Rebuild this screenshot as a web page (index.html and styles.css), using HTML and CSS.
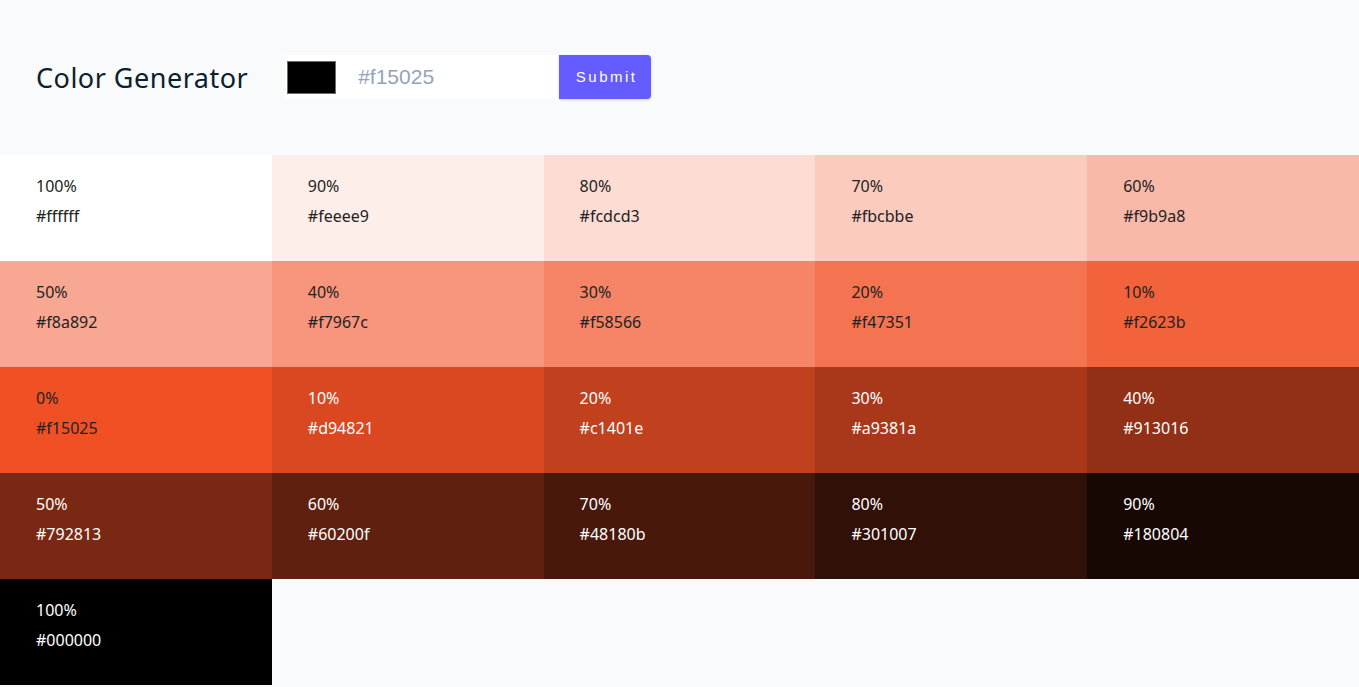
FILE: index.html
```html
<!DOCTYPE html>
<html lang="en">
<head>
<meta charset="utf-8">
<title>Color Generator</title>
<link rel="stylesheet" href="styles.css">
</head>
<body>
<section class="container">
  <h3 class="title">Color Generator</h3>
  <form class="form">
    <div class="field">
      <span class="swatch"></span>
      <input class="hex-input" type="text" placeholder="#f15025">
    </div>
    <button class="btn" type="button">Submit</button>
  </form>
</section>
<section class="colors">
  <article class="color" style="background:#ffffff"><p class="pct">100%</p><p class="hex">#ffffff</p></article>
  <article class="color" style="background:#feeee9"><p class="pct">90%</p><p class="hex">#feeee9</p></article>
  <article class="color" style="background:#fcdcd3"><p class="pct">80%</p><p class="hex">#fcdcd3</p></article>
  <article class="color" style="background:#fbcbbe"><p class="pct">70%</p><p class="hex">#fbcbbe</p></article>
  <article class="color" style="background:#f9b9a8"><p class="pct">60%</p><p class="hex">#f9b9a8</p></article>
  <article class="color" style="background:#f8a892"><p class="pct">50%</p><p class="hex">#f8a892</p></article>
  <article class="color" style="background:#f7967c"><p class="pct">40%</p><p class="hex">#f7967c</p></article>
  <article class="color" style="background:#f58566"><p class="pct">30%</p><p class="hex">#f58566</p></article>
  <article class="color" style="background:#f47351"><p class="pct">20%</p><p class="hex">#f47351</p></article>
  <article class="color" style="background:#f2623b"><p class="pct">10%</p><p class="hex">#f2623b</p></article>
  <article class="color" style="background:#f15025"><p class="pct">0%</p><p class="hex">#f15025</p></article>
  <article class="color light" style="background:#d94821"><p class="pct">10%</p><p class="hex">#d94821</p></article>
  <article class="color light" style="background:#c1401e"><p class="pct">20%</p><p class="hex">#c1401e</p></article>
  <article class="color light" style="background:#a9381a"><p class="pct">30%</p><p class="hex">#a9381a</p></article>
  <article class="color light" style="background:#913016"><p class="pct">40%</p><p class="hex">#913016</p></article>
  <article class="color light" style="background:#792813"><p class="pct">50%</p><p class="hex">#792813</p></article>
  <article class="color light" style="background:#60200f"><p class="pct">60%</p><p class="hex">#60200f</p></article>
  <article class="color light" style="background:#48180b"><p class="pct">70%</p><p class="hex">#48180b</p></article>
  <article class="color light" style="background:#301007"><p class="pct">80%</p><p class="hex">#301007</p></article>
  <article class="color light" style="background:#180804"><p class="pct">90%</p><p class="hex">#180804</p></article>
  <article class="color light" style="background:#000000"><p class="pct">100%</p><p class="hex">#000000</p></article>
</section>
</body>
</html>
```
FILE: styles.css
```css
* { box-sizing: border-box; margin: 0; padding: 0; }
body {
  background: #f8fafc;
  font-family: "Noto Sans", "Open Sans", sans-serif;
  color: #222;
}
.container {
  height: 155px;
  display: flex;
  align-items: center;
  padding: 0 36px;
  gap: 37px;
}
.title {
  font-weight: 400;
  font-size: 27px;
  letter-spacing: 0.5px;
  color: #0f1e2e;
  margin-top: 0;
}
.form {
  display: flex;
  height: 44px;
  margin-top: -2px;
}
.field {
  width: 274px;
  background: #fff;
  display: flex;
  align-items: center;
  padding-left: 2px;
}
.swatch {
  width: 49px;
  height: 33px;
  background: #000;
  border: 1px solid #6b6b6b;
  margin-top: 1px;
  flex: none;
}
.hex-input {
  flex: 1;
  min-width: 0;
  height: 100%;
  border: none;
  outline: none;
  background: transparent;
  font-family: "Liberation Sans", Arial, sans-serif;
  font-size: 21px;
  padding-left: 22px;
}
.hex-input::placeholder { color: #94a3b8; }
.btn {
  width: 92px;
  border: none;
  border-radius: 0 4px 4px 0;
  background: #645cff;
  color: #fff;
  font-family: "Liberation Sans", Arial, sans-serif;
  font-size: 15px;
  letter-spacing: 2.5px;
  padding-left: 3px;
  box-shadow: 0 1px 3px rgba(0,0,0,0.15);
}
.colors {
  display: grid;
  grid-template-columns: repeat(5, 1fr);
  grid-auto-rows: 106px;
}
.color {
  padding: 16px 36px 0;
  font-size: 16px;
  line-height: 30px;
  color: #222;
}
.color.light { color: #fff; }
```
